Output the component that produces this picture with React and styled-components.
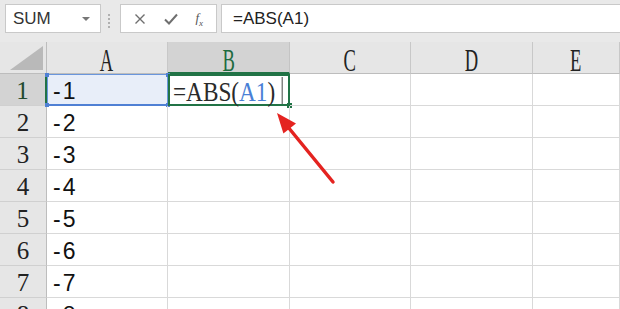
import React from "react";
import styled, { createGlobalStyle } from "styled-components";

const GlobalStyle = createGlobalStyle`
  html, body {
    margin: 0;
    padding: 0;
    background: #ffffff;
    overflow: hidden;
  }
`;

const Page = styled.div`
  position: relative;
  width: 620px;
  height: 309px;
  overflow: hidden;
  background: #fff;
`;

const Toolbar = styled.div`
  display: flex;
  align-items: flex-start;
  height: 42px;
  box-sizing: border-box;
  padding: 4px 0 0 5px;
  background: #e9e9e9;
`;

const Box = styled.div`
  display: flex;
  align-items: center;
  height: 29px;
  box-sizing: border-box;
  background: #fff;
  border: 1px solid #c9c9c9;
  font-family: "Liberation Sans", Arial, sans-serif;
  color: #333;
`;

const NameBox = styled(Box)`
  width: 96px;
  padding: 0 0 0 7px;
  font-size: 17px;
  justify-content: space-between;
`;

const Caret = styled.span`
  width: 0;
  height: 0;
  margin-right: 10px;
  border-left: 4px solid transparent;
  border-right: 4px solid transparent;
  border-top: 4px solid #777;
`;

const Grip = styled.div`
  display: flex;
  flex-direction: column;
  gap: 2px;
  margin: 10px 10px 0 7px;
  span {
    width: 2px;
    height: 2px;
    background: #b0b0b0;
  }
`;

const FuncBox = styled(Box)`
  width: 97px;
  justify-content: space-around;
  padding: 0 4px;
  color: #666;
`;

const FxText = styled.span`
  font-family: "Liberation Serif", serif;
  font-style: italic;
  font-size: 13px;
  color: #555;
`;

const FormulaBox = styled(Box)`
  flex: 1;
  margin-left: 4px;
  padding-left: 11px;
  font-size: 17px;
  color: #222;
  border-right: none;
`;

const Grid = styled.div`
  display: grid;
  grid-template-columns: 47px 121px 122px 121px 122px 1fr;
  grid-template-rows: 32px;
  grid-auto-rows: 32px;
`;

const Corner = styled.div`
  position: relative;
  background: #e6e6e6;
  border-right: 1px solid #bdbdbd;
  border-bottom: 1px solid #bdbdbd;
  box-sizing: border-box;
  &::after {
    content: "";
    position: absolute;
    right: 3px;
    bottom: 3px;
    width: 0;
    height: 0;
    border-left: 33px solid transparent;
    border-bottom: 24px solid #b9b9b9;
  }
`;

const ColHead = styled.div`
  display: flex;
  align-items: center;
  justify-content: center;
  box-sizing: border-box;
  background: ${(p) => (p.active ? "#d3d3d3" : "#e6e6e6")};
  border-right: 1px solid ${(p) => (p.active ? "#c4c4c4" : "#c8c8c8")};
  border-bottom: ${(p) => (p.active ? "2px solid #217346" : "1px solid #bdbdbd")};
  color: ${(p) => (p.active ? "#1e6b3f" : "#222")};
  font-family: "Liberation Serif", "Times New Roman", serif;
  font-size: 32px;
  line-height: 1;
  span {
    display: inline-block;
    transform: scaleX(0.58);
    margin-top: 5px;
  }
`;

const RowHead = styled.div`
  display: flex;
  align-items: center;
  justify-content: center;
  box-sizing: border-box;
  background: ${(p) => (p.active ? "#d3d3d3" : "#e6e6e6")};
  border-right: ${(p) => (p.active ? "2px solid #217346" : "1px solid #bdbdbd")};
  border-bottom: 1px solid #d0d0d0;
  color: ${(p) => (p.active ? "#1f4a2e" : "#222")};
  font-family: "Liberation Serif", "Times New Roman", serif;
  font-size: 25px;
  padding-top: 3px;
`;

const Cell = styled.div`
  position: relative;
  display: flex;
  align-items: center;
  box-sizing: border-box;
  padding: 4px 0 0 6px;
  border-right: 1px solid #d9d9d9;
  border-bottom: 1px solid #d9d9d9;
  font-family: "Liberation Sans", Arial, sans-serif;
  font-size: 23px;
  color: #111;
  white-space: nowrap;
`;

const Minus = styled.span`
  margin-right: 2px;
`;

const RefCell = styled(Cell)`
  background: #e8eef9;
  border: 1px solid #6a96dc;
  border-bottom: 2px solid #4f80d4;
  padding-left: 5px;
`;

const Marker = styled.i`
  position: absolute;
  width: 4px;
  height: 4px;
  background: ${(p) => p.color};
  ${(p) => p.pos};
`;

const ActiveCell = styled(Cell)`
  border: 2px solid #217346;
  padding: 4px 0 0 3px;
  font-family: "Liberation Serif", "Times New Roman", serif;
  font-size: 28px;
  color: #2a2a2a;
`;

const Formula = styled.span`
  display: inline-flex;
  align-items: center;
  transform: scaleX(0.83);
  transform-origin: left center;
`;

const RefText = styled.span`
  color: #4a7fd6;
`;

const Cursor = styled.span`
  display: inline-block;
  width: 1px;
  height: 27px;
  margin-left: 8px;
  margin-top: -4px;
  background: #222;
`;

const ArrowLayer = styled.svg`
  position: absolute;
  left: 0;
  top: 0;
  pointer-events: none;
`;

const cols = ["A", "B", "C", "D", "E"];
const rows = [1, 2, 3, 4, 5, 6, 7, 8];

export default function App() {
  return (
    <Page>
      <GlobalStyle />
      <Toolbar>
        <NameBox>
          SUM
          <Caret />
        </NameBox>
        <Grip>
          <span />
          <span />
          <span />
          <span />
        </Grip>
        <FuncBox>
          <svg width="12" height="12" viewBox="0 0 12 12">
            <path d="M1.5 1.5 L10.5 10.5 M10.5 1.5 L1.5 10.5" stroke="#6f6f6f" strokeWidth="1.4" />
          </svg>
          <svg width="14" height="12" viewBox="0 0 14 12">
            <path d="M1 6.5 L5 10.5 L13 1.5" stroke="#6f6f6f" strokeWidth="2" fill="none" />
          </svg>
          <FxText>
            f<sub style={{ fontSize: "9px" }}>x</sub>
          </FxText>
        </FuncBox>
        <FormulaBox>=ABS(A1)</FormulaBox>
      </Toolbar>
      <Grid>
        <Corner />
        {cols.map((c) => (
          <ColHead key={c} active={c === "B"}>
            <span>{c}</span>
          </ColHead>
        ))}
        {rows.map((r) => (
          <React.Fragment key={r}>
            <RowHead active={r === 1}>{r}</RowHead>
            {r === 1 ? (
              <RefCell>
                <Minus>-</Minus>1
                <Marker color="#4f80d4" pos="left:-3px;top:-2px;" />
                <Marker color="#4f80d4" pos="right:-3px;top:-2px;" />
                <Marker color="#4f80d4" pos="left:-3px;bottom:-3px;" />
                <Marker color="#4f80d4" pos="right:-3px;bottom:-3px;" />
              </RefCell>
            ) : (
              <Cell>
                <Minus>-</Minus>
                {r}
              </Cell>
            )}
            {r === 1 ? (
              <ActiveCell>
                <Formula>
                  =ABS(<RefText>A1</RefText>)<Cursor />
                </Formula>
                <Marker color="#217346" pos="right:-4px;bottom:-4px;width:5px;height:5px;" />
              </ActiveCell>
            ) : (
              <Cell />
            )}
            <Cell />
            <Cell />
            <Cell />
          </React.Fragment>
        ))}
      </Grid>
      <ArrowLayer width="620" height="309">
        <line x1="333" y1="182" x2="288" y2="127" stroke="#e42320" strokeWidth="3.5" strokeLinecap="round" />
        <polygon points="277,113 296,123.5 283.4,133.5" fill="#e42320" />
      </ArrowLayer>
    </Page>
  );
}
